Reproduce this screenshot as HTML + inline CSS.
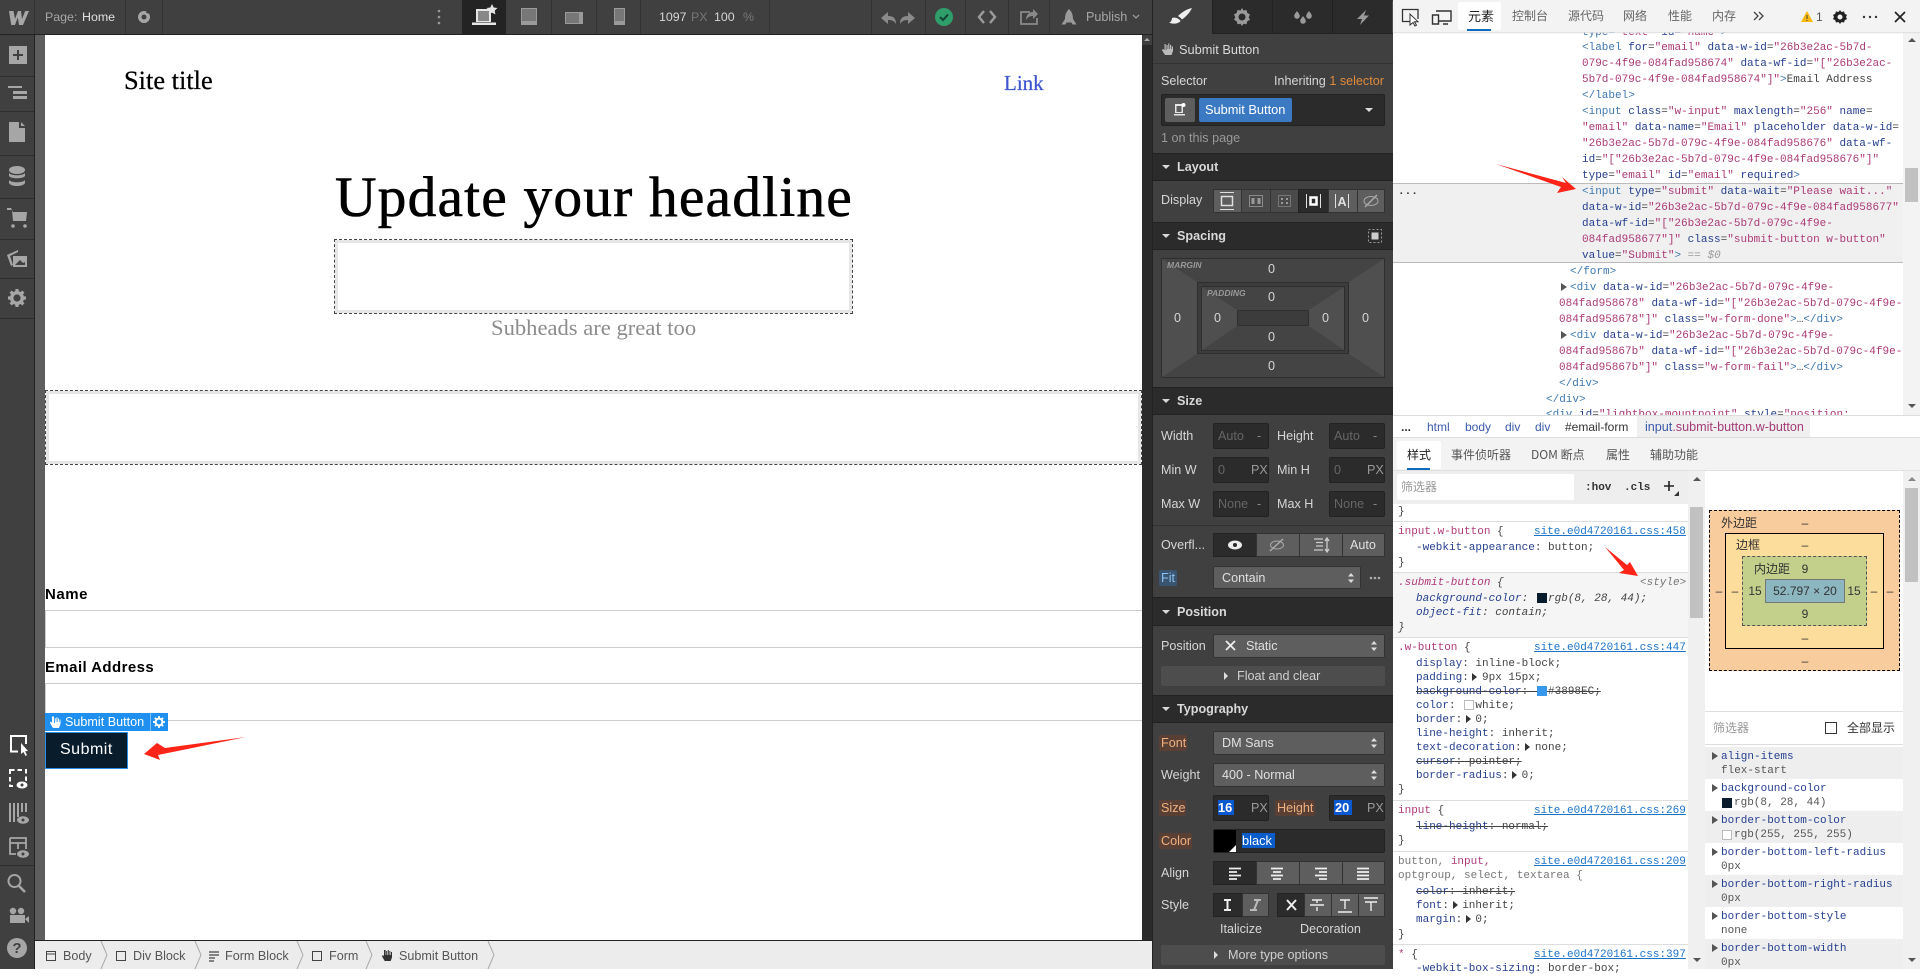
<!DOCTYPE html>
<html><head><meta charset="utf-8"><title>Webflow Designer</title>
<style>
*{box-sizing:border-box;margin:0;padding:0}
html,body{width:1920px;height:969px;overflow:hidden;background:#fff;font-family:"Liberation Sans","Noto Sans CJK SC",sans-serif}
.a{position:absolute}
.t{position:absolute;white-space:pre;line-height:16px;height:16px}
.p{font-size:12.6px;color:#d6d6d6}
.h{font-size:12.6px;color:#d9d9d9;font-weight:bold}
.hd{position:absolute;left:1153px;width:240px;background:#2b2b2b;border-top:1px solid #222;border-bottom:1px solid #222}
.tri{position:absolute;left:1162px;width:0;height:0;border-left:4px solid transparent;border-right:4px solid transparent;border-top:4px solid #d9d9d9}
.b{position:absolute;background:#5e5e5e;border:1px solid #333}
.k{position:absolute;background:#2b2b2b;border:1px solid #222}
.sep{position:absolute;top:0;height:34px;width:1px;background:#333}
.rs{position:absolute;left:0;width:34px;height:1px;background:#2e2e2e}
.m{position:absolute;white-space:pre;margin-top:1px;height:16px;font:11px/16px "Liberation Mono",monospace;color:#444}
.g{color:#3f78b0}.n{color:#26408f}.v{color:#ab3a76}
.s{color:#b03a7a}.o{color:#777}
.lk{color:#1a73c8;text-decoration:underline}
.del{text-decoration:line-through}
.cj{position:absolute;white-space:pre;font-size:12px;line-height:16px;height:16px;color:#555;font-family:"Noto Sans CJK SC","Liberation Sans",sans-serif}
.ln{position:absolute;height:1px;background:#ddd}
.bm{position:absolute;white-space:pre;font-size:12px;line-height:16px;height:16px;color:#333;transform:translateX(-50%);font-family:"Liberation Sans","Noto Sans CJK SC",sans-serif}
.rw{position:absolute;left:1705px;width:198px;height:32px}
.tr{position:absolute;width:0;height:0;border-top:4px solid transparent;border-bottom:4px solid transparent;border-left:6px solid #333}
.lab{position:absolute;background:#5a4034;border-radius:2px;height:16px}
.o2{color:#f0b080}
.bc{position:absolute;top:948px;font-size:12.6px;line-height:16px;color:#555;white-space:pre}
svg{position:absolute;overflow:visible}
</style></head>
<body>

<!-- canvas -->
<div class="a" style="left:35px;top:35px;width:10px;height:905px;background:#5e5e5e"></div>
<div class="a" style="left:45px;top:35px;width:1097px;height:905px;background:#fff"></div>
<div class="a" style="left:1142px;top:35px;width:10px;height:905px;background:#2b2b2b"></div>
<div class="a" style="left:1142px;top:35px;width:10px;height:10px;background:#3f3f3f"></div>
<div class="a" style="left:1144px;top:38px;width:0;height:0;border-left:3px solid transparent;border-right:3px solid transparent;border-bottom:3px solid #aaa"></div>

<div class="a" style="left:124px;top:63px;font:26.4px/34px 'Liberation Serif',serif;-webkit-text-stroke:.25px #000;color:#000;white-space:pre">Site title</div>
<div class="a" style="left:1004px;top:68px;font:21px/30px 'Liberation Serif',serif;-webkit-text-stroke:.2px #3f55cf;color:#3f55cf;white-space:pre">Link</div>
<div class="a" style="left:335px;top:162px;font:57.5px/72px 'Liberation Serif',serif;letter-spacing:1.15px;-webkit-text-stroke:.6px #000;color:#000;white-space:pre">Update your headline</div>
<div class="a" style="left:334px;top:239px;width:519px;height:75px;border:1px dashed #444;box-shadow:inset 0 0 0 3px #e6e6e6"></div>
<div class="a" style="left:491px;top:313px;font:22.6px/30px 'Liberation Serif',serif;color:#8c8c8c;white-space:pre">Subheads are great too</div>
<div class="a" style="left:45px;top:390px;width:1097px;height:75px;border:1px dashed #444;box-shadow:inset 0 0 0 3px #e6e6e6"></div>

<div class="a" style="left:45px;top:586px;font:bold 15px/18px 'Liberation Sans',sans-serif;letter-spacing:.55px;color:#000">Name</div>
<div class="a" style="left:45px;top:610px;width:1097px;height:38px;border:1px solid #ccc;border-right:0"></div>
<div class="a" style="left:45px;top:659px;font:bold 15px/18px 'Liberation Sans',sans-serif;letter-spacing:.42px;color:#000">Email Address</div>
<div class="a" style="left:45px;top:683px;width:1097px;height:38px;border:1px solid #ccc;border-right:0"></div>
<div class="a" style="left:45px;top:713px;width:123px;height:18px;background:#2090f0"></div>
<div class="a" style="left:150px;top:713px;width:1px;height:18px;background:#7cc0f8"></div>
<svg style="left:50px;top:715px" width="11" height="14" viewBox="0 0 11 14"><path d="M2 1.500v6L.5 6.500 0 8l3 5h6l1.500-4V4.500H9.600V7H9V3.200H8V7h-.6V2.400h-1V7H5.800V3.200h-1V8H4V1.500z" fill="#fff"/></svg>
<div class="t" style="left:65px;top:714px;font-size:12.6px;color:#fff">Submit Button</div>
<svg style="left:153px;top:716px" width="12" height="12" viewBox="0 0 12 12"><circle cx="6" cy="6" r="3.400" fill="none" stroke="#fff" stroke-width="2"/><path d="M6 0v2.500M6 9.500V12M0 6h2.500M9.500 6H12M1.800 1.800l1.800 1.800M8.400 8.400l1.800 1.800M1.800 10.200l1.800-1.800M8.400 3.600l1.800-1.800" stroke="#fff" stroke-width="1.700"/></svg>
<div class="a" style="left:45px;top:732px;width:83px;height:37px;background:#081c2c;border:1px solid #2a8fe8"></div>
<div class="a" style="left:60px;top:740px;font:16px/20px 'Liberation Sans',sans-serif;letter-spacing:.5px;color:#fff">Submit</div>
<svg style="left:0;top:0" width="1920" height="969"><polygon points="246,737 165,748 157,743 144,754 160,760 158,755" fill="#ff2418"/></svg>

<!-- breadcrumb -->
<div class="a" style="left:35px;top:940px;width:1118px;height:29px;background:#ececec;border-top:1px solid #222"></div>
<svg style="left:0;top:0" width="1160" height="969" fill="none" stroke="#aaa">
<path d="M101 941l6 14-6 14M195 941l6 14-6 14M297 941l6 14-6 14M366 941l6 14-6 14M488 941l6 14-6 14"/>
<g stroke="#444"><path d="M46.500 951.500h9v9h-9zM46.500 954h9"/><path d="M116.500 951.500h9v9h-9z"/><path d="M312.500 951.500h9v9h-9z"/><path d="M209 952h10M209 955h10M209 958h6M209 961h5" stroke-width="1.300"/></g>
<path d="M384 950v6l-1.200-1-.8 1.400 2.700 4.600h6l1.300-3.600V952h-1v3h-.6v-4h-1v4h-.6v-5h-1v5h-.6v-4h-1v4h-.6v-5z" fill="#333" stroke="none"/></svg>
<div class="bc" style="left:63px">Body</div>
<div class="bc" style="left:133px">Div Block</div>
<div class="bc" style="left:225px">Form Block</div>
<div class="bc" style="left:329px">Form</div>
<div class="bc" style="left:399px">Submit Button</div>

<!-- top bar -->
<div class="a" style="left:0;top:0;width:1152px;height:34px;background:#404040"></div>
<div class="a" style="left:0;top:34px;width:1153px;height:1px;background:#222"></div>
<div class="sep" style="left:34px"></div><div class="sep" style="left:125px"></div><div class="sep" style="left:162px"></div>
<div class="sep" style="left:551px"></div><div class="sep" style="left:596px"></div><div class="sep" style="left:640px"></div><div class="sep" style="left:769px"></div>
<div class="sep" style="left:871px"></div><div class="sep" style="left:925px"></div><div class="sep" style="left:965px"></div><div class="sep" style="left:1008px"></div><div class="sep" style="left:1049px"></div>
<div class="a" style="left:462px;top:0;width:44px;height:34px;background:#232323"></div>
<svg style="left:0;top:0" width="1152" height="34">
<path d="M9 11h4.500l1.500 8 3-8h3l1 8 3.200-8H29l-6 14h-4l-1.200-7.500L15 25h-3.800z" fill="#a6a6a6"/>
<path d="M144 11a6 6 0 1 0 .01 0zM144 14.500a2.500 2.500 0 1 1-.01 0z" fill="#a6a6a6" fill-rule="evenodd"/><path d="M148 9l3 5-5-1z" fill="#404040"/>
<g fill="#9a9a9a"><circle cx="439" cy="11" r="1.300"/><circle cx="439" cy="17" r="1.300"/><circle cx="439" cy="23" r="1.300"/></g>
<path d="M476 9h15v13h-15zM472 22.500h24v2.500h-24z" fill="#e6e6e6"/><path d="M478 11h11v10h-11z" fill="#888"/><path d="M492 4l1.700 3.500 3.800.5-2.800 2.600.7 3.800-3.400-1.800-3.400 1.800.7-3.800-2.800-2.600 3.800-.5z" fill="#e6e6e6"/>
<path d="M521.500 8.500h15v16h-15z" fill="#777" stroke="#9a9a9a" stroke-width="1"/><rect x="521.500" y="21" width="15" height="4" fill="#9a9a9a"/>
<rect x="565.500" y="12.500" width="17" height="11" fill="#777" stroke="#9a9a9a"/><rect x="579" y="12.500" width="3.500" height="11" fill="#9a9a9a"/>
<rect x="614.500" y="8.500" width="10" height="16" fill="#777" stroke="#9a9a9a"/><rect x="614.500" y="21" width="10" height="4" fill="#9a9a9a"/>
<path d="M881 18l7-6v4c5 0 8 2 8 8-2-3-4-4-8-4v4z" fill="#8a8a8a"/><path d="M915 18l-7-6v4c-5 0-8 2-8 8 2-3 4-4 8-4v4z" fill="#8a8a8a"/>
<circle cx="944" cy="17" r="9" fill="#2f9e6a"/><path d="M940 17l3 3 5-5.500" fill="none" stroke="#143" stroke-width="2"/>
<path d="M984 11l-5 6 5 6M990 11l5 6-5 6" fill="none" stroke="#9a9a9a" stroke-width="2.500"/>
<path d="M1030 12h-9v12h16v-6" fill="none" stroke="#8a8a8a" stroke-width="1.800"/><path d="M1026 20c0-5 3-8 7-8v-3l5 5-5 5v-3c-3 0-5 1-7 4z" fill="#8a8a8a"/>
<path d="M1069 9c3 3 4 6 4 10l3.500 5.500h-4l-1-2h-5l-1 2h-4l3.500-5.500c0-4 1-7 4-10z" fill="#9a9a9a"/>
<path d="M1133 15l3 3 3-3" fill="none" stroke="#9a9a9a" stroke-width="1.300"/>
</svg>
<div class="t" style="left:45px;top:9px;font-size:12.4px;color:#a6a6a6">Page:</div>
<div class="t" style="left:82px;top:9px;font-size:12.4px;color:#e0e0e0">Home</div>
<div class="t" style="left:659px;top:9px;font-size:12.4px;color:#d6d6d6">1097</div>
<div class="t" style="left:691px;top:9px;font-size:12.4px;color:#777">PX</div>
<div class="t" style="left:714px;top:9px;font-size:12.4px;color:#d6d6d6">100</div>
<div class="t" style="left:743px;top:9px;font-size:12.4px;color:#777">%</div>
<div class="t" style="left:1086px;top:9px;font-size:12.6px;color:#a6a6a6">Publish</div>

<!-- left rail -->
<div class="a" style="left:0;top:35px;width:34px;height:905px;background:#404040"></div>
<div class="a" style="left:0;top:940px;width:35px;height:29px;background:#404040"></div>
<div class="a" style="left:34px;top:35px;width:1px;height:934px;background:#222"></div>
<div class="rs" style="top:76px"></div><div class="rs" style="top:111px"></div><div class="rs" style="top:155px"></div><div class="rs" style="top:198px"></div><div class="rs" style="top:239px"></div><div class="rs" style="top:278px"></div><div class="rs" style="top:318px"></div><div class="rs" style="top:865px"></div>
<svg style="left:0;top:0" width="34" height="969" fill="#a6a6a6">
<path d="M9 46h18v18H9zM17 50v4h-4v2h4v4h2v-4h4v-2h-4v-4z" fill-rule="evenodd"/>
<path d="M8 86h14v2H8zM13 91h14v3H13zM13 96h14v3H13z"/>
<path d="M9 122h10v6h6v14H9zM21 122l4 4h-4z"/>
<ellipse cx="17" cy="170" rx="8" ry="4"/><path d="M9 173c2 3 14 3 16 0v3c-2 3-14 3-16 0zM9 180c2 3 14 3 16 0v3c-2 4-14 4-16 0z"/>
<path d="M7 208h4l2 4h14l-1 9H13l-1-11H7z"/><circle cx="13" cy="226" r="1.800"/><circle cx="25" cy="226" r="1.800"/>
<path d="M7 255l11-5v2l-8 4 3 9-2 1zM13 256h14v11H13z"/><path d="M15 265l5-5 3 3 2-1v3z" fill="#404040"/>
<circle cx="17" cy="298" r="5.300" fill="none" stroke="#a6a6a6" stroke-width="3.400"/>
<path d="M17 289v3M17 304v3M8 298h3M23 298h3M10.600 291.600l2.200 2.200M21.200 302.200l2.200 2.200M10.600 304.400l2.200-2.200M21.200 293.800l2.200-2.200" stroke="#a6a6a6" stroke-width="3.200"/>
<path d="M18 751.500H11V736h15v8" fill="none" stroke="#fff" stroke-width="2"/>
<path d="M21 743v11l2.500-2 2 4 1.500-1-2-3.800 3-.2z" fill="#fff"/>
<rect x="10" y="770" width="16" height="16" fill="none" stroke="#fff" stroke-width="2" stroke-dasharray="4.500 3"/>
<ellipse cx="22" cy="785" rx="7" ry="5" fill="#404040"/><ellipse cx="22" cy="785" rx="5.500" ry="3.500" fill="#fff"/><circle cx="22" cy="785" r="1.500" fill="#404040"/>
<path d="M9 803h2v19H9zM13 803h2v19h-2zM17 803h2v14h-2zM21 803h2v9h-2zM25 803h2v9h-2z"/><ellipse cx="23" cy="820" rx="6" ry="3.700"/><circle cx="23" cy="820" r="1.500" fill="#404040"/>
<path d="M10 838h16v11M10 838v16h6M10 843h16M18 843v6" fill="none" stroke="#a6a6a6" stroke-width="1.800"/><ellipse cx="23" cy="854" rx="6" ry="3.700"/><circle cx="23" cy="854" r="1.500" fill="#404040"/>
<path d="M14.500 875a6 6 0 1 0 .01 0z" fill="none" stroke="#a6a6a6" stroke-width="2"/><path d="M19 886l6 6" stroke="#a6a6a6" stroke-width="2.500"/>
<circle cx="13" cy="911" r="3.200"/><circle cx="21" cy="911" r="3.200"/><path d="M10 915h15v8H10zM25 919l4-3v7z"/>
<circle cx="17" cy="948" r="10"/><text x="17" y="953" font-size="15" font-weight="bold" text-anchor="middle" fill="#404040" font-family="Liberation Sans">?</text>
</svg>

<!-- right panel -->
<div class="a" style="left:1152px;top:0;width:241px;height:969px;background:#404040;border-left:1px solid #222"></div>
<div class="a" style="left:1212px;top:0;width:181px;height:34px;background:#2b2b2b;border-bottom:1px solid #222;border-left:1px solid #222"></div>
<div class="a" style="left:1272px;top:0;width:1px;height:34px;background:#222"></div><div class="a" style="left:1332px;top:0;width:1px;height:34px;background:#222"></div>
<svg style="left:1150px;top:0" width="245" height="34">
<path d="M42 8c-5 1-10 4-14 8 1.500 1 3 2 4 3.500 4-3 8-7 10-11.500zM22 18c3-1 7 .5 8.500 3-1 2-5 3-8.500 2.500l-3-.7c2-.8 3-2.800 3-4.800z" fill="#eee"/>
<path d="M92 8l1.500 2.500 3-.5.800 3 2.700 1.400-1.300 2.800 1.300 2.600-2.700 1.400-.8 3-3-.5L92 26l-1.500-2.300-3 .5-.8-3-2.700-1.400 1.300-2.600-1.300-2.800 2.700-1.400.8-3 3 .5zM92 13.500a3.500 3.500 0 1 0 .01 0z" fill="#9a9a9a" fill-rule="evenodd"/>
<path d="M147 11c1.800 2.500 2.800 3.600 2.800 5a2.800 2.800 0 0 1-5.600 0c0-1.400 1-2.500 2.800-5zM159 11c1.800 2.500 2.800 3.600 2.800 5a2.800 2.800 0 0 1-5.600 0c0-1.400 1-2.500 2.800-5zM153 16c1.800 2.500 2.800 3.600 2.800 5a2.800 2.800 0 0 1-5.600 0c0-1.400 1-2.500 2.800-5z" fill="#9a9a9a"/>
<path d="M216 10l-9 9h5l-2 6 9-9.500h-5z" fill="#9a9a9a"/>
</svg>
<div class="t" style="left:1179px;top:42px;font-size:12.8px;color:#d9d9d9">Submit Button</div>
<svg style="left:1162px;top:42px" width="12" height="14" viewBox="0 0 12 14"><path d="M2.500 2v6L1 7 0 8.200 3 13h6.500l1.500-4V4.500H9.800V7h-.6V3H8v4h-.6V1.500H6.200V7h-.6V3H4.400v5h-.7V2z" fill="#bbb"/></svg>
<div class="a" style="left:1153px;top:63px;width:240px;height:1px;background:#333"></div>
<div class="t p" style="left:1161px;top:73px">Selector</div>
<div class="t p" style="left:1274px;top:73px">Inheriting <span style="color:#e08a3c">1 selector</span></div>
<div class="k" style="left:1161px;top:94px;width:224px;height:32px;border-radius:2px"></div>
<div class="a" style="left:1165px;top:98px;width:30px;height:24px;background:#5e5e5e;border-radius:2px"></div>
<svg style="left:1174px;top:103px" width="13" height="14"><path d="M1 1h8v9H1zM0 11h11v1.500H0z" fill="#e6e6e6"/><circle cx="9.500" cy="2" r="2" fill="#fff"/><path d="M2.500 3h5v6h-5z" fill="#5e5e5e"/></svg>
<div class="a" style="left:1199px;top:98px;width:93px;height:24px;background:#3b79c3;border-radius:2px"></div>
<div class="t" style="left:1205px;top:102px;font-size:12.8px;color:#fff">Submit Button</div>
<div class="a" style="left:1365px;top:108px;width:0;height:0;border-left:4px solid transparent;border-right:4px solid transparent;border-top:4px solid #ddd"></div>
<div class="t p" style="left:1161px;top:130px;color:#999">1 on this page</div>

<div class="hd" style="top:153px;height:28px"></div><div class="tri" style="top:165px"></div><div class="t h" style="left:1177px;top:159px">Layout</div>
<div class="t p" style="left:1161px;top:192px">Display</div>
<div class="b" style="left:1213px;top:189px;width:29px;height:24px"></div>
<div class="b" style="left:1241px;top:189px;width:30px;height:24px;background:#4a4a4a"></div>
<div class="b" style="left:1270px;top:189px;width:29px;height:24px;background:#4a4a4a"></div>
<div class="k" style="left:1298px;top:189px;width:31px;height:24px"></div>
<div class="b" style="left:1328px;top:189px;width:30px;height:24px"></div>
<div class="b" style="left:1357px;top:189px;width:28px;height:24px"></div>
<svg style="left:1210px;top:189px" width="180" height="24" fill="none" stroke="#e0e0e0">
<path d="M10 3.500h14M10 20.500h14"/><rect x="11.500" y="7.500" width="11" height="9" stroke-width="1.500"/>
<rect x="39.500" y="6.500" width="13" height="11" stroke="#888"/><path d="M43 9v6M49 9v6" stroke="#999" stroke-width="3"/>
<rect x="68.500" y="6.500" width="12" height="11" stroke="#777"/><path d="M71 9h2v2h-2zM76 9h2v2h-2zM71 13h2v2h-2zM76 13h2v2h-2z" fill="#999" stroke="none"/>
<path d="M96.500 5v14M110.500 5v14"/><rect x="100.500" y="8.500" width="6" height="7" stroke="#fff" stroke-width="2.500"/>
<path d="M125.500 5v14M138.500 5v14"/><text x="132" y="17" font-size="12.500" font-weight="bold" text-anchor="middle" fill="#e0e0e0" stroke="none" font-family="Liberation Sans">A</text>
<ellipse cx="161" cy="12" rx="7" ry="4.500" stroke="#aaa"/><path d="M155 18l12-12" stroke="#aaa" stroke-width="1.500"/></svg>

<div class="hd" style="top:222px;height:28px"></div><div class="tri" style="top:234px"></div><div class="t h" style="left:1177px;top:228px">Spacing</div>
<svg style="left:1368px;top:229px" width="16" height="15"><rect x=".5" y=".5" width="13" height="13" fill="none" stroke="#999" stroke-dasharray="2 2"/><rect x="3.500" y="3.500" width="7" height="7" fill="#ccc"/></svg>
<svg style="left:1161px;top:258px" width="224" height="120">
<rect x=".5" y=".5" width="223" height="119" fill="#4a4a4a" stroke="#2e2e2e"/>
<polygon points="1,1 223,1 188,24 36,24" fill="#444"/><polygon points="1,1 36,24 36,96 1,119" fill="#4f4f4f"/><polygon points="223,1 188,24 188,96 223,119" fill="#4f4f4f"/><polygon points="1,119 36,96 188,96 223,119" fill="#444"/>
<rect x="36.500" y="24.500" width="151" height="71" fill="#3c3c3c" stroke="#2e2e2e"/>
<rect x="40.500" y="28.500" width="143" height="64" fill="#4c4c4c" stroke="#2e2e2e"/>
<polygon points="41,29 183,29 148,52 76,52" fill="#444"/><polygon points="41,92 183,92 148,68 76,68" fill="#444"/><polygon points="41,29 76,52 76,68 41,92" fill="#4f4f4f"/><polygon points="183,29 148,52 148,68 183,92" fill="#4f4f4f"/>
<rect x="76.500" y="52.500" width="71" height="15" rx="1" fill="#3c3c3c" stroke="#2e2e2e"/>
</svg>
<div class="t" style="left:1167px;top:257px;font:italic bold 8.5px/16px 'Liberation Sans',sans-serif;color:#999">MARGIN</div>
<div class="t" style="left:1207px;top:285px;font:italic bold 8.5px/16px 'Liberation Sans',sans-serif;color:#999">PADDING</div>
<div class="t p" style="left:1268px;top:261px">0</div><div class="t p" style="left:1268px;top:289px">0</div><div class="t p" style="left:1174px;top:310px">0</div><div class="t p" style="left:1214px;top:310px">0</div><div class="t p" style="left:1322px;top:310px">0</div><div class="t p" style="left:1362px;top:310px">0</div><div class="t p" style="left:1268px;top:329px">0</div><div class="t p" style="left:1268px;top:358px">0</div>

<div class="hd" style="top:387px;height:28px"></div><div class="tri" style="top:399px"></div><div class="t h" style="left:1177px;top:393px">Size</div>
<div class="t p" style="left:1161px;top:428px">Width</div><div class="t p" style="left:1277px;top:428px">Height</div>
<div class="t p" style="left:1161px;top:462px">Min W</div><div class="t p" style="left:1277px;top:462px">Min H</div>
<div class="t p" style="left:1161px;top:496px">Max W</div><div class="t p" style="left:1277px;top:496px">Max H</div>
<div class="k" style="left:1213px;top:423px;width:56px;height:26px;border-radius:2px"></div><div class="k" style="left:1329px;top:423px;width:56px;height:26px;border-radius:2px"></div>
<div class="k" style="left:1213px;top:457px;width:56px;height:26px;border-radius:2px"></div><div class="k" style="left:1329px;top:457px;width:56px;height:26px;border-radius:2px"></div>
<div class="k" style="left:1213px;top:491px;width:56px;height:26px;border-radius:2px"></div><div class="k" style="left:1329px;top:491px;width:56px;height:26px;border-radius:2px"></div>
<div class="t p" style="left:1218px;top:428px;color:#666">Auto</div><div class="t p" style="left:1257px;top:428px;color:#888">-</div><div class="t p" style="left:1334px;top:428px;color:#666">Auto</div><div class="t p" style="left:1373px;top:428px;color:#888">-</div>
<div class="t p" style="left:1218px;top:462px;color:#666">0</div><div class="t p" style="left:1251px;top:462px;color:#999">PX</div><div class="t p" style="left:1334px;top:462px;color:#666">0</div><div class="t p" style="left:1367px;top:462px;color:#999">PX</div>
<div class="t p" style="left:1218px;top:496px;color:#666">None</div><div class="t p" style="left:1257px;top:496px;color:#888">-</div><div class="t p" style="left:1334px;top:496px;color:#666">None</div><div class="t p" style="left:1373px;top:496px;color:#888">-</div>
<div class="a" style="left:1153px;top:525px;width:240px;height:1px;background:#333"></div>

<div class="t p" style="left:1161px;top:537px">Overfl...</div>
<div class="k" style="left:1213px;top:533px;width:44px;height:24px"></div>
<div class="b" style="left:1256px;top:533px;width:45px;height:24px"></div>
<div class="b" style="left:1299px;top:533px;width:44px;height:24px"></div>
<div class="b" style="left:1342px;top:533px;width:43px;height:24px"></div>
<div class="t p" style="left:1350px;top:537px;color:#e0e0e0">Auto</div>
<svg style="left:1220px;top:533px" width="120" height="24"><ellipse cx="15" cy="12" rx="7" ry="4.500" fill="#eee"/><circle cx="15" cy="12" r="2" fill="#2b2b2b"/><ellipse cx="57" cy="12" rx="6.500" ry="4" fill="none" stroke="#aaa"/><path d="M50 18l13-12" stroke="#aaa" stroke-width="1.500"/><path d="M94 6h9M96 9.500h7M96 13h7M94 17h9" stroke="#ccc" stroke-width="1.300"/><path d="M107 6v12M105 8l2-3 2 3M105 16l2 3 2-3" stroke="#ccc" stroke-width="1.300" fill="none"/></svg>
<div class="a" style="left:1159px;top:570px;width:18px;height:16px;background:#3a5570;border-radius:2px"></div>
<div class="t" style="left:1161px;top:570px;font-size:12.6px;color:#8fc0f0">Fit</div>
<div class="b" style="left:1213px;top:566px;width:148px;height:23px;border-radius:2px"></div>
<div class="t p" style="left:1222px;top:570px;color:#e0e0e0">Contain</div>
<svg style="left:1347px;top:571px" width="8" height="14" fill="#ddd"><path d="M4 2l3 3.500H1zM4 12L1 8.500h6z"/></svg>
<svg style="left:1369px;top:575px" width="14" height="6" fill="#aaa"><circle cx="2" cy="3" r="1.300"/><circle cx="6" cy="3" r="1.300"/><circle cx="10" cy="3" r="1.300"/></svg>

<div class="hd" style="top:597px;height:29px"></div><div class="tri" style="top:610px"></div><div class="t h" style="left:1177px;top:604px">Position</div>
<div class="t p" style="left:1161px;top:638px">Position</div>
<div class="b" style="left:1213px;top:634px;width:172px;height:24px;border-radius:2px"></div>
<svg style="left:1225px;top:640px" width="12" height="12"><path d="M1 1l9 9M10 1l-9 9" stroke="#eee" stroke-width="1.800"/></svg>
<div class="t p" style="left:1246px;top:638px;color:#e0e0e0">Static</div>
<svg style="left:1370px;top:639px" width="8" height="14" fill="#ddd"><path d="M4 2l3 3.500H1zM4 12L1 8.500h6z"/></svg>
<div class="a" style="left:1161px;top:666px;width:224px;height:20px;background:#4d4d4d;border-radius:2px"></div>
<div class="a" style="left:1224px;top:672px;width:0;height:0;border-top:4px solid transparent;border-bottom:4px solid transparent;border-left:4px solid #ddd"></div>
<div class="t p" style="left:1237px;top:668px;color:#d0d0d0">Float and clear</div>

<div class="hd" style="top:695px;height:28px"></div><div class="tri" style="top:707px"></div><div class="t h" style="left:1177px;top:701px">Typography</div>
<div class="lab" style="left:1159px;top:735px;width:28px"></div><div class="t o2" style="left:1161px;top:735px;font-size:12.6px">Font</div>
<div class="b" style="left:1213px;top:731px;width:172px;height:24px;border-radius:2px"></div>
<div class="t p" style="left:1222px;top:735px;color:#e0e0e0">DM Sans</div>
<svg style="left:1370px;top:736px" width="8" height="14" fill="#ddd"><path d="M4 2l3 3.500H1zM4 12L1 8.500h6z"/></svg>
<div class="t p" style="left:1161px;top:767px">Weight</div>
<div class="b" style="left:1213px;top:763px;width:172px;height:24px;border-radius:2px"></div>
<div class="t p" style="left:1222px;top:767px;color:#e0e0e0">400 - Normal</div>
<svg style="left:1370px;top:768px" width="8" height="14" fill="#ddd"><path d="M4 2l3 3.500H1zM4 12L1 8.500h6z"/></svg>
<div class="lab" style="left:1159px;top:800px;width:27px"></div><div class="t o2" style="left:1161px;top:800px;font-size:12.6px">Size</div>
<div class="k" style="left:1213px;top:795px;width:56px;height:26px;border-radius:2px"></div>
<div class="a" style="left:1218px;top:800px;width:16px;height:15px;background:#0a58d0"></div>
<div class="t" style="left:1218px;top:800px;font-size:12.8px;font-weight:bold;color:#fff">16</div>
<div class="t p" style="left:1251px;top:800px;color:#999">PX</div>
<div class="lab" style="left:1275px;top:800px;width:40px"></div><div class="t o2" style="left:1277px;top:800px;font-size:12.6px">Height</div>
<div class="k" style="left:1329px;top:795px;width:56px;height:26px;border-radius:2px"></div>
<div class="a" style="left:1334px;top:800px;width:18px;height:15px;background:#0a58d0"></div>
<div class="t" style="left:1335px;top:800px;font-size:12.8px;font-weight:bold;color:#fff">20</div>
<div class="t p" style="left:1367px;top:800px;color:#999">PX</div>
<div class="lab" style="left:1159px;top:833px;width:33px"></div><div class="t o2" style="left:1161px;top:833px;font-size:12.6px">Color</div>
<div class="k" style="left:1213px;top:829px;width:172px;height:24px;border-radius:2px"></div>
<div class="a" style="left:1214px;top:830px;width:22px;height:22px;background:#000"></div>
<svg style="left:1229px;top:845px" width="7" height="7"><path d="M7 0v7H0z" fill="#fff"/></svg>
<div class="a" style="left:1242px;top:833px;width:33px;height:15px;background:#0a5cc8"></div>
<div class="t" style="left:1242px;top:833px;font-size:12.8px;color:#fff">black</div>
<div class="t p" style="left:1161px;top:865px">Align</div>
<div class="k" style="left:1213px;top:861px;width:44px;height:24px"></div>
<div class="b" style="left:1256px;top:861px;width:45px;height:24px"></div>
<div class="b" style="left:1299px;top:861px;width:44px;height:24px"></div>
<div class="b" style="left:1342px;top:861px;width:43px;height:24px"></div>
<svg style="left:1228px;top:867px" width="150" height="13" fill="none" stroke="#eee" stroke-width="1.800"><path d="M1 1.500h12M1 5h8M1 8.500h12M1 12h8"/><path d="M43 1.500h12M45 5h8M43 8.500h12M45 12h8"/><path d="M87 1.500h12M91 5h8M87 8.500h12M91 12h8"/><path d="M129 1.500h12M129 5h12M129 8.500h12M129 12h12"/></svg>
<div class="t p" style="left:1161px;top:897px">Style</div>
<div class="k" style="left:1213px;top:893px;width:30px;height:24px"></div>
<div class="b" style="left:1242px;top:893px;width:27px;height:24px"></div>
<div class="k" style="left:1277px;top:893px;width:28px;height:24px"></div>
<div class="b" style="left:1304px;top:893px;width:28px;height:24px"></div>
<div class="b" style="left:1331px;top:893px;width:28px;height:24px"></div>
<div class="b" style="left:1358px;top:893px;width:27px;height:24px"></div>
<svg style="left:1210px;top:893px" width="180" height="24" stroke="#eee" fill="none"><path d="M14 7h7M14 17h7M17.500 7v10" stroke-width="2"/><path d="M44 7h7M40 17h7M48 7l-4 10" stroke-width="2" stroke="#bbb"/><path d="M77 7l9 10M86 7l-9 10" stroke-width="2"/><path d="M100 12h14M107 7v3M107 14v4M102 7h10" stroke-width="1.400"/><path d="M130 7h10M135 7v9M128 19h14" stroke-width="1.400"/><path d="M154 5h14M155 9h12M161 9v9" stroke-width="1.400"/></svg>
<div class="t p" style="left:1220px;top:921px">Italicize</div>
<div class="t p" style="left:1300px;top:921px">Decoration</div>
<div class="a" style="left:1161px;top:945px;width:224px;height:20px;background:#4d4d4d;border-radius:2px"></div>
<div class="a" style="left:1214px;top:951px;width:0;height:0;border-top:4px solid transparent;border-bottom:4px solid transparent;border-left:4px solid #ddd"></div>
<div class="t p" style="left:1228px;top:947px;color:#d0d0d0">More type options</div>

<!-- devtools -->
<div class="a" style="left:1393px;top:0;width:527px;height:969px;background:#fff"></div>
<div class="a" style="left:1393px;top:0;width:527px;height:32px;background:#f3f3f3;box-shadow:0 1px 1px #ddd;z-index:2"></div>
<div style="position:absolute;left:0;top:0;z-index:3">
<div class="a" style="left:1458px;top:2px;width:43px;height:28px;background:#fff;border-radius:2px"></div>
<div class="a" style="left:1467px;top:29px;width:24px;height:2px;background:#0f6cbd"></div>
<svg style="left:1400px;top:8px" width="60" height="18" fill="none" stroke="#333"><path d="M18 11V1.500H2.500v12H11" stroke-width="1.300"/><path d="M10 6v11l3-2.500 2 3.500 1.500-.8-2-3.500h3.500z" fill="#fff" stroke="#333"/><path d="M36 3h15v10h-12M32.500 7h6v9h-6zM43 16h5" stroke-width="1.400"/></svg>
<div class="cj" style="left:1468px;top:8px;font-size:13px;color:#222">元素</div>
<div class="cj" style="left:1512px;top:8px;font-size:12px;color:#666">控制台</div>
<div class="cj" style="left:1568px;top:8px;font-size:12px;color:#666">源代码</div>
<div class="cj" style="left:1623px;top:8px;font-size:12px;color:#666">网络</div>
<div class="cj" style="left:1668px;top:8px;font-size:12px;color:#666">性能</div>
<div class="cj" style="left:1712px;top:8px;font-size:12px;color:#666">内存</div>
<svg style="left:1753px;top:11px" width="12" height="10" fill="none" stroke="#444" stroke-width="1.300"><path d="M1 1l4 4-4 4M6 1l4 4-4 4"/></svg>
<svg style="left:1801px;top:11px" width="12" height="11"><path d="M6 0l6 11H0z" fill="#f7b90f"/><path d="M6 4v4M6 9v1" stroke="#444"/></svg>
<div class="t" style="left:1816px;top:9px;font-size:12px;color:#555">1</div>
<svg style="left:1833px;top:10px" width="14" height="14"><path d="M7 0l1.500 2 2.500-.5.800 2.300L14 5l-1 2 1 2-2.200 1.200-.8 2.300L8.500 12 7 14l-1.500-2-2.500.5-.8-2.300L0 9l1-2-1-2 2.200-1.200.8-2.300L5.500 2zM7 4.500a2.500 2.500 0 1 0 .01 0z" fill="#222" fill-rule="evenodd"/></svg>
<svg style="left:1862px;top:15px" width="16" height="4" fill="#333"><circle cx="2" cy="2" r="1.200"/><circle cx="8" cy="2" r="1.200"/><circle cx="14" cy="2" r="1.200"/></svg>
<svg style="left:1895px;top:12px" width="10" height="10" stroke="#222" stroke-width="1.700"><path d="M0 0l10 10M10 0L0 10"/></svg>
</div>

<!-- DOM -->
<div class="a" style="left:1393px;top:183px;width:510px;height:80px;background:#f0f0f0;border-top:1px solid #bbb;border-bottom:1px solid #bbb"></div>
<div class="m" style="left:1582px;top:24px"><span class="g">type=</span><span class="v">"text"</span> <span class="n">id=</span><span class="v">"name"</span><span class="g">&gt;</span></div>
<div class="m" style="left:1582px;top:39px"><span class="g">&lt;label</span> <span class="n">for</span>=<span class="v">"email"</span> <span class="n">data-w-id</span>=<span class="v">"26b3e2ac-5b7d-</span></div>
<div class="m" style="left:1582px;top:55px"><span class="v">079c-4f9e-084fad958674"</span> <span class="n">data-wf-id</span>=<span class="v">"["26b3e2ac-</span></div>
<div class="m" style="left:1582px;top:71px"><span class="v">5b7d-079c-4f9e-084fad958674"]"</span><span class="g">&gt;</span>Email Address</div>
<div class="m" style="left:1582px;top:87px"><span class="g">&lt;/label&gt;</span></div>
<div class="m" style="left:1582px;top:103px"><span class="g">&lt;input</span> <span class="n">class</span>=<span class="v">"w-input"</span> <span class="n">maxlength</span>=<span class="v">"256"</span> <span class="n">name</span>=</div>
<div class="m" style="left:1582px;top:119px"><span class="v">"email"</span> <span class="n">data-name</span>=<span class="v">"Email"</span> <span class="n">placeholder</span> <span class="n">data-w-id</span>=</div>
<div class="m" style="left:1582px;top:135px"><span class="v">"26b3e2ac-5b7d-079c-4f9e-084fad958676"</span> <span class="n">data-wf-</span></div>
<div class="m" style="left:1582px;top:151px"><span class="n">id</span>=<span class="v">"["26b3e2ac-5b7d-079c-4f9e-084fad958676"]"</span></div>
<div class="m" style="left:1582px;top:167px"><span class="n">type</span>=<span class="v">"email"</span> <span class="n">id</span>=<span class="v">"email"</span> <span class="n">required</span><span class="g">&gt;</span></div>
<div class="m" style="left:1398px;top:183px;font-weight:bold;color:#333">...</div>
<div class="m" style="left:1582px;top:183px"><span class="g">&lt;input</span> <span class="n">type</span>=<span class="v">"submit"</span> <span class="n">data-wait</span>=<span class="v">"Please wait..."</span></div>
<div class="m" style="left:1582px;top:199px"><span class="n">data-w-id</span>=<span class="v">"26b3e2ac-5b7d-079c-4f9e-084fad958677"</span></div>
<div class="m" style="left:1582px;top:215px"><span class="n">data-wf-id</span>=<span class="v">"["26b3e2ac-5b7d-079c-4f9e-</span></div>
<div class="m" style="left:1582px;top:231px"><span class="v">084fad958677"]"</span> <span class="n">class</span>=<span class="v">"submit-button w-button"</span></div>
<div class="m" style="left:1582px;top:247px"><span class="n">value</span>=<span class="v">"Submit"</span><span class="g">&gt;</span> <span style="color:#999">== <i>$0</i></span></div>
<div class="m" style="left:1570px;top:263px"><span class="g">&lt;/form&gt;</span></div>
<div class="m" style="left:1570px;top:279px"><span class="g">&lt;div</span> <span class="n">data-w-id</span>=<span class="v">"26b3e2ac-5b7d-079c-4f9e-</span></div>
<div class="m" style="left:1559px;top:295px"><span class="v">084fad958678"</span> <span class="n">data-wf-id</span>=<span class="v">"["26b3e2ac-5b7d-079c-4f9e-</span></div>
<div class="m" style="left:1559px;top:311px"><span class="v">084fad958678"]"</span> <span class="n">class</span>=<span class="v">"w-form-done"</span><span class="g">&gt;</span>…<span class="g">&lt;/div&gt;</span></div>
<div class="m" style="left:1570px;top:327px"><span class="g">&lt;div</span> <span class="n">data-w-id</span>=<span class="v">"26b3e2ac-5b7d-079c-4f9e-</span></div>
<div class="m" style="left:1559px;top:343px"><span class="v">084fad95867b"</span> <span class="n">data-wf-id</span>=<span class="v">"["26b3e2ac-5b7d-079c-4f9e-</span></div>
<div class="m" style="left:1559px;top:359px"><span class="v">084fad95867b"]"</span> <span class="n">class</span>=<span class="v">"w-form-fail"</span><span class="g">&gt;</span>…<span class="g">&lt;/div&gt;</span></div>
<div class="m" style="left:1559px;top:375px"><span class="g">&lt;/div&gt;</span></div>
<div class="m" style="left:1546px;top:391px"><span class="g">&lt;/div&gt;</span></div>
<div class="m" style="left:1546px;top:406px;height:9px;overflow:hidden"><span class="g">&lt;div</span> <span class="n">id</span>=<span class="v">"lightbox-mountpoint"</span> <span class="n">style</span>=<span class="v">"position:</span></div>
<div class="tr" style="left:1561px;top:283px;border-left-color:#555"></div><div class="tr" style="left:1561px;top:331px;border-left-color:#555"></div>
<div class="a" style="left:1903px;top:32px;width:17px;height:383px;background:#f3f3f3"></div>
<div class="a" style="left:1905px;top:168px;width:13px;height:34px;background:#c1c1c1"></div>
<div class="a" style="left:1908px;top:38px;width:0;height:0;border-left:4px solid transparent;border-right:4px solid transparent;border-bottom:4px solid #555"></div>
<div class="a" style="left:1908px;top:404px;width:0;height:0;border-left:4px solid transparent;border-right:4px solid transparent;border-top:4px solid #555"></div>

<!-- breadcrumb devtools -->
<div class="a" style="left:1393px;top:415px;width:527px;height:23px;background:#fff;border-top:1px solid #ddd;border-bottom:1px solid #ddd"></div>
<div class="a" style="left:1637px;top:416px;width:173px;height:21px;background:#f0f0f0"></div>
<div class="t" style="left:1401px;top:419px;font-size:12px;font-weight:bold;color:#333">...</div>
<div class="t" style="left:1427px;top:419px;font-size:12px;color:#3a5aa8">html</div>
<div class="t" style="left:1465px;top:419px;font-size:12px;color:#3a5aa8">body</div>
<div class="t" style="left:1505px;top:419px;font-size:12px;color:#3a5aa8">div</div>
<div class="t" style="left:1535px;top:419px;font-size:12px;color:#3a5aa8">div</div>
<div class="t" style="left:1565px;top:419px;font-size:12px;color:#333">#email-form</div>
<div class="t" style="left:1645px;top:419px;font-size:12.6px;color:#3a5aa8">input<span style="color:#a33b76">.submit-button.w-button</span></div>

<div class="a" style="left:1393px;top:438px;width:527px;height:33px;background:#f3f3f3;border-bottom:1px solid #e0e0e0"></div>
<div class="a" style="left:1397px;top:441px;width:44px;height:28px;background:#fff;border-radius:2px"></div>
<div class="a" style="left:1407px;top:468px;width:23px;height:2px;background:#0f6cbd"></div>
<div class="cj" style="left:1407px;top:447px;color:#222">样式</div>
<div class="cj" style="left:1451px;top:447px">事件侦听器</div>
<div class="cj" style="left:1531px;top:447px">DOM 断点</div>
<div class="cj" style="left:1606px;top:447px">属性</div>
<div class="cj" style="left:1650px;top:447px">辅助功能</div>

<div class="a" style="left:1393px;top:471px;width:295px;height:33px;background:#eee"></div>
<div class="a" style="left:1397px;top:474px;width:177px;height:26px;background:#fff;border-radius:2px"></div>
<div class="cj" style="left:1401px;top:479px;color:#999">筛选器</div>
<div class="m" style="left:1585px;top:479px;font-weight:bold;color:#333">:hov</div>
<div class="m" style="left:1624px;top:479px;font-weight:bold;color:#333">.cls</div>
<svg style="left:1664px;top:481px" width="20" height="16"><path d="M5 0v10M0 5h10" stroke="#222" stroke-width="1.600"/><path d="M15 10v5h-5z" fill="#333"/></svg>

<!-- styles -->
<div class="a" style="left:1393px;top:572px;width:295px;height:65px;background:#f5f5f5"></div>
<div class="ln" style="left:1393px;top:521px;width:295px"></div><div class="ln" style="left:1393px;top:572px;width:295px"></div><div class="ln" style="left:1393px;top:637px;width:295px"></div><div class="ln" style="left:1393px;top:800px;width:295px"></div><div class="ln" style="left:1393px;top:851px;width:295px"></div><div class="ln" style="left:1393px;top:944px;width:295px"></div>
<div class="m" style="left:1398px;top:503px">}</div>
<div class="m" style="left:1398px;top:523px"><span class="s">input.w-button</span> {</div>
<div class="m lk" style="left:1534px;top:523px">site.e0d4720161.css:458</div>
<div class="m" style="left:1416px;top:539px"><span class="n">-webkit-appearance</span>: button;</div>
<div class="m" style="left:1398px;top:554px">}</div>
<div class="m" style="left:1398px;top:574px;font-style:italic"><span class="s">.submit-button</span> {</div>
<div class="m o" style="left:1640px;top:574px;font-style:italic">&lt;style&gt;</div>
<div class="m" style="left:1416px;top:590px;font-style:italic"><span class="n">background-color</span>:   rgb(8, 28, 44);</div>
<div class="a" style="left:1537px;top:593px;width:10px;height:10px;background:#081c2c"></div>
<div class="m" style="left:1416px;top:604px;font-style:italic"><span class="n">object-fit</span>: contain;</div>
<div class="m" style="left:1398px;top:619px;font-style:italic">}</div>
<div class="m" style="left:1398px;top:639px"><span class="s">.w-button</span> {</div>
<div class="m lk" style="left:1534px;top:639px">site.e0d4720161.css:447</div>
<div class="m" style="left:1416px;top:655px"><span class="n">display</span>: inline-block;</div>
<div class="m" style="left:1416px;top:669px"><span class="n">padding</span>:  9px 15px;</div>
<div class="tr" style="left:1472px;top:673px;border-left-width:5px"></div>
<div class="m del" style="left:1416px;top:683px"><span class="n">background-color</span>:   #3898EC;</div>
<div class="a" style="left:1537px;top:686px;width:10px;height:10px;background:#3898ec"></div>
<div class="m" style="left:1416px;top:697px"><span class="n">color</span>:   white;</div>
<div class="a" style="left:1464px;top:700px;width:10px;height:10px;background:#fff;border:1px solid #bbb"></div>
<div class="m" style="left:1416px;top:711px"><span class="n">border</span>:  0;</div>
<div class="tr" style="left:1466px;top:715px;border-left-width:5px"></div>
<div class="m" style="left:1416px;top:725px"><span class="n">line-height</span>: inherit;</div>
<div class="m" style="left:1416px;top:739px"><span class="n">text-decoration</span>:  none;</div>
<div class="tr" style="left:1525px;top:743px;border-left-width:5px"></div>
<div class="m del" style="left:1416px;top:753px"><span class="n">cursor</span>: pointer;</div>
<div class="m" style="left:1416px;top:767px"><span class="n">border-radius</span>:  0;</div>
<div class="tr" style="left:1512px;top:771px;border-left-width:5px"></div>
<div class="m" style="left:1398px;top:781px">}</div>
<div class="m" style="left:1398px;top:802px"><span class="s">input</span> {</div>
<div class="m lk" style="left:1534px;top:802px">site.e0d4720161.css:269</div>
<div class="m del" style="left:1416px;top:818px"><span class="n">line-height</span>: normal;</div>
<div class="m" style="left:1398px;top:832px">}</div>
<div class="m" style="left:1398px;top:853px"><span class="o">button,</span> <span class="s">input,</span></div>
<div class="m lk" style="left:1534px;top:853px">site.e0d4720161.css:209</div>
<div class="m o" style="left:1398px;top:867px">optgroup, select, textarea {</div>
<div class="m del" style="left:1416px;top:883px"><span class="n">color</span>: inherit;</div>
<div class="m" style="left:1416px;top:897px"><span class="n">font</span>:  inherit;</div>
<div class="tr" style="left:1453px;top:901px;border-left-width:5px"></div>
<div class="m" style="left:1416px;top:911px"><span class="n">margin</span>:  0;</div>
<div class="tr" style="left:1466px;top:915px;border-left-width:5px"></div>
<div class="m" style="left:1398px;top:926px">}</div>
<div class="m" style="left:1398px;top:946px"><span class="s">*</span> {</div>
<div class="m lk" style="left:1534px;top:946px">site.e0d4720161.css:397</div>
<div class="m" style="left:1416px;top:960px"><span class="n">-webkit-box-sizing</span>: border-box;</div>

<div class="a" style="left:1688px;top:471px;width:17px;height:498px;background:#f0f0f0"></div>
<div class="a" style="left:1690px;top:507px;width:13px;height:111px;background:#c1c1c1"></div>
<div class="a" style="left:1693px;top:477px;width:0;height:0;border-left:4px solid transparent;border-right:4px solid transparent;border-bottom:4px solid #555"></div>
<div class="a" style="left:1693px;top:958px;width:0;height:0;border-left:4px solid transparent;border-right:4px solid transparent;border-top:4px solid #555"></div>

<!-- box model -->
<div class="a" style="left:1709px;top:510px;width:191px;height:161px;background:#f9cc9d;border:1px dashed #000"></div>
<div class="a" style="left:1725px;top:533px;width:159px;height:116px;background:#fddd9b;border:1px solid #000"></div>
<div class="a" style="left:1742px;top:556px;width:125px;height:70px;background:#c3d08b;border:1px dashed #555"></div>
<div class="a" style="left:1765px;top:579px;width:80px;height:24px;background:#8cb6c0;border:1px solid #777"></div>
<div class="bm" style="left:1739px;top:515px">外边距</div>
<div class="bm" style="left:1805px;top:515px">–</div>
<div class="bm" style="left:1748px;top:537px">边框</div>
<div class="bm" style="left:1805px;top:537px">–</div>
<div class="bm" style="left:1772px;top:561px">内边距</div>
<div class="bm" style="left:1805px;top:561px">9</div>
<div class="bm" style="left:1719px;top:583px">–</div><div class="bm" style="left:1735px;top:583px">–</div><div class="bm" style="left:1755px;top:583px">15</div>
<div class="bm" style="left:1805px;top:583px">52.797 × 20</div>
<div class="bm" style="left:1854px;top:583px">15</div><div class="bm" style="left:1874px;top:583px">–</div><div class="bm" style="left:1890px;top:583px">–</div>
<div class="bm" style="left:1805px;top:606px">9</div>
<div class="bm" style="left:1805px;top:630px">–</div>
<div class="bm" style="left:1805px;top:653px">–</div>

<div class="ln" style="left:1705px;top:711px;width:198px"></div>
<div class="cj" style="left:1713px;top:720px;color:#999">筛选器</div>
<div class="a" style="left:1825px;top:722px;width:12px;height:12px;border:1px solid #333;background:#fff"></div>
<div class="cj" style="left:1847px;top:720px;color:#333">全部显示</div>
<div class="ln" style="left:1705px;top:744px;width:198px"></div>

<div class="rw" style="top:747px;background:#eee"></div><div class="rw" style="top:811px;background:#eee"></div><div class="rw" style="top:875px;background:#eee"></div><div class="rw" style="top:939px;height:30px;background:#eee"></div>
<div class="tr" style="left:1712px;top:752px;border-left-color:#555"></div><div class="tr" style="left:1712px;top:784px;border-left-color:#555"></div><div class="tr" style="left:1712px;top:816px;border-left-color:#555"></div><div class="tr" style="left:1712px;top:848px;border-left-color:#555"></div><div class="tr" style="left:1712px;top:880px;border-left-color:#555"></div><div class="tr" style="left:1712px;top:912px;border-left-color:#555"></div><div class="tr" style="left:1712px;top:944px;border-left-color:#555"></div>
<div class="m n" style="left:1721px;top:748px">align-items</div><div class="m" style="left:1721px;top:762px;color:#555">flex-start</div>
<div class="m n" style="left:1721px;top:780px">background-color</div><div class="a" style="left:1722px;top:798px;width:10px;height:10px;background:#081c2c"></div><div class="m" style="left:1734px;top:794px;color:#555">rgb(8, 28, 44)</div>
<div class="m n" style="left:1721px;top:812px">border-bottom-color</div><div class="a" style="left:1722px;top:830px;width:10px;height:10px;background:#fff;border:1px solid #bbb"></div><div class="m" style="left:1734px;top:826px;color:#555">rgb(255, 255, 255)</div>
<div class="m n" style="left:1721px;top:844px">border-bottom-left-radius</div><div class="m" style="left:1721px;top:858px;color:#555">0px</div>
<div class="m n" style="left:1721px;top:876px">border-bottom-right-radius</div><div class="m" style="left:1721px;top:890px;color:#555">0px</div>
<div class="m n" style="left:1721px;top:908px">border-bottom-style</div><div class="m" style="left:1721px;top:922px;color:#555">none</div>
<div class="m n" style="left:1721px;top:940px">border-bottom-width</div><div class="m" style="left:1721px;top:954px;color:#555">0px</div>

<div class="a" style="left:1903px;top:471px;width:17px;height:498px;background:#f0f0f0"></div>
<div class="a" style="left:1905px;top:488px;width:13px;height:94px;background:#c1c1c1"></div>
<div class="a" style="left:1908px;top:477px;width:0;height:0;border-left:4px solid transparent;border-right:4px solid transparent;border-bottom:4px solid #888"></div>
<div class="a" style="left:1908px;top:958px;width:0;height:0;border-left:4px solid transparent;border-right:4px solid transparent;border-top:4px solid #555"></div>

<svg style="left:0;top:0;z-index:5" width="1920" height="969"><polygon points="1496,164 1566,183 1562,177 1576,189 1557,193 1561,187" fill="#ff2418"/><polygon points="1605,547 1627,565 1630,562 1638,576 1619,573 1624,570" fill="#ff2418"/></svg>
</body></html>
